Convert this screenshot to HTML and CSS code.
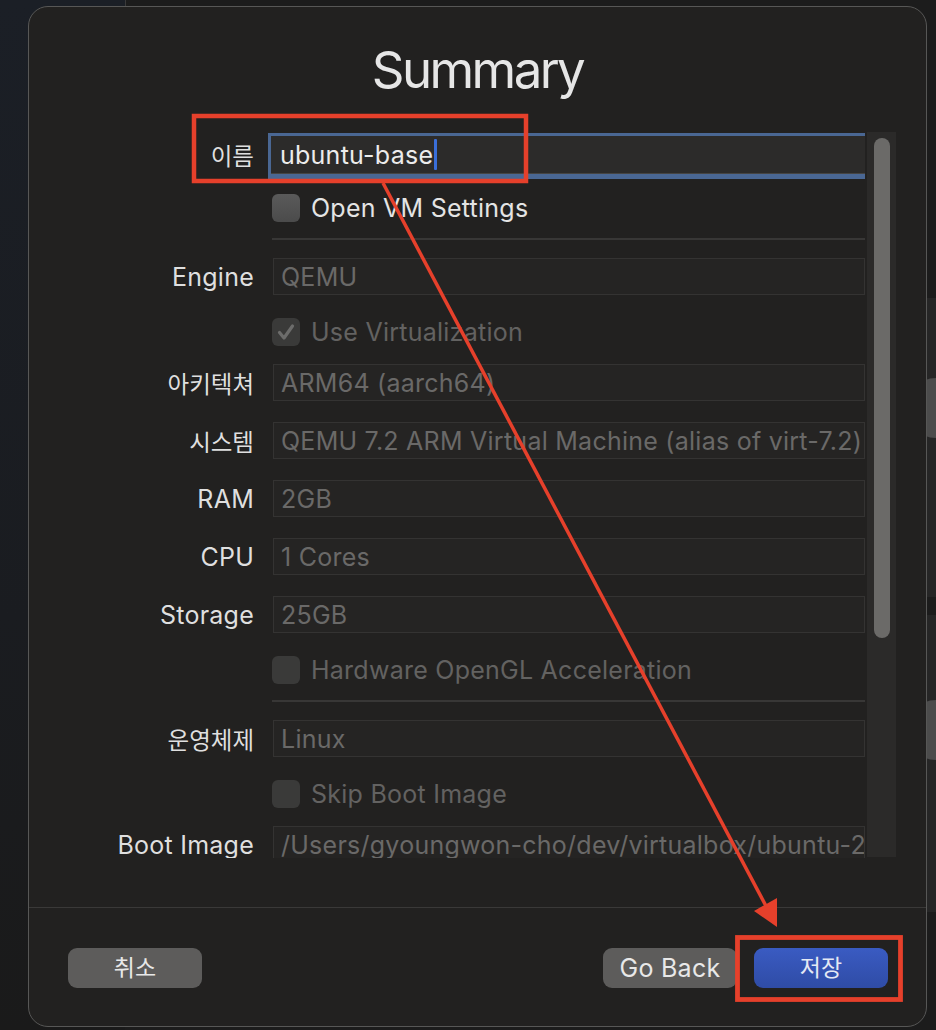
FILE: index.html
```html
<!DOCTYPE html>
<html lang="ko">
<head>
<meta charset="utf-8">
<title>Summary</title>
<link rel="stylesheet" href="styles.css">
</head>
<body>
<div class="backdrop">
  <div class="bd-left"></div>
  <div class="bd-top-line"></div>
  <div class="bd-panel bd-panel-a"></div>
  <div class="bd-panel bd-panel-b"></div>
  <div class="bd-circle bd-circle-a"></div>
  <div class="bd-circle bd-circle-b"></div>
</div>

<div class="dialog">
  <h1 class="title">Summary</h1>

  <div class="scroll">
    <div class="form">
      <div class="row field-row name-row">
        <span class="lbl ko">이름</span>
        <div class="field name-field"><span class="val">ubuntu-base</span><span class="caret"></span></div>
      </div>
      <div class="row check-row">
        <span></span>
        <div class="check"><span class="box"></span><span class="ctext">Open VM Settings</span></div>
      </div>
      <div class="sep"></div>
      <div class="row field-row">
        <span class="lbl">Engine</span>
        <div class="field"><span class="val">QEMU</span></div>
      </div>
      <div class="row check-row">
        <span></span>
        <div class="check disabled"><span class="box checked"><svg viewBox="0 0 28 28" width="28" height="28"><path d="M7.5 14.5 L12 20 L20.5 8" fill="none" stroke="#6c6c6b" stroke-width="3.2" stroke-linecap="round" stroke-linejoin="round"/></svg></span><span class="ctext">Use Virtualization</span></div>
      </div>
      <div class="row field-row">
        <span class="lbl ko">아키텍쳐</span>
        <div class="field"><span class="val">ARM64 (aarch64)</span></div>
      </div>
      <div class="row field-row">
        <span class="lbl ko">시스템</span>
        <div class="field"><span class="val">QEMU 7.2 ARM Virtual Machine (alias of virt-7.2)</span></div>
      </div>
      <div class="row field-row">
        <span class="lbl">RAM</span>
        <div class="field"><span class="val">2GB</span></div>
      </div>
      <div class="row field-row">
        <span class="lbl">CPU</span>
        <div class="field"><span class="val">1 Cores</span></div>
      </div>
      <div class="row field-row">
        <span class="lbl">Storage</span>
        <div class="field"><span class="val">25GB</span></div>
      </div>
      <div class="row check-row">
        <span></span>
        <div class="check disabled"><span class="box"></span><span class="ctext">Hardware OpenGL Acceleration</span></div>
      </div>
      <div class="sep"></div>
      <div class="row field-row">
        <span class="lbl ko">운영체제</span>
        <div class="field"><span class="val">Linux</span></div>
      </div>
      <div class="row check-row">
        <span></span>
        <div class="check disabled"><span class="box"></span><span class="ctext">Skip Boot Image</span></div>
      </div>
      <div class="row field-row">
        <span class="lbl">Boot Image</span>
        <div class="field"><span class="val">/Users/gyoungwon-cho/dev/virtualbox/ubuntu-2</span></div>
      </div>
    </div>
    <div class="track"><div class="thumb"></div></div>
  </div>

  <div class="footer">
    <button class="btn ko">취소</button>
    <div class="spacer"></div>
    <button class="btn">Go Back</button>
    <button class="btn primary ko">저장</button>
  </div>
</div>

<svg class="annot" width="936" height="1030" viewBox="0 0 936 1030">
  <rect x="194" y="116" width="332" height="65" fill="none" stroke="#e6402b" stroke-width="4.5"/>
  <rect x="737.5" y="937.5" width="163" height="62" fill="none" stroke="#e6402b" stroke-width="4.8"/>
  <line x1="383" y1="183" x2="766" y2="906" stroke="#e6402b" stroke-width="3.5"/>
  <polygon points="777,927 754,911 777,898" fill="#e6402b"/>
</svg>
</body>
</html>
```

FILE: styles.css
```css
* { box-sizing: border-box; }

html, body {
  margin: 0;
  padding: 0;
}

body {
  width: 936px;
  height: 1030px;
  overflow: hidden;
  position: relative;
  background: #1c1c1c;
  font-family: Inter, "Noto Sans CJK KR", sans-serif;
  font-size: 25px;
  letter-spacing: 0.25px;
  color: #e2e2e2;
  padding: 6px 9px 0 28px;
}

/* desktop behind the sheet */
.backdrop { position: absolute; inset: 0; z-index: 0; }
.bd-left {
  position: absolute; left: 0; top: 0; width: 125px; height: 1030px;
  background: linear-gradient(180deg, #1b1f26 0%, #1a1c20 60%, #1a1a1a 100%);
}
.bd-top-line { position: absolute; left: 125px; top: 0; width: 1px; height: 8px; background: #3a3a3a; }
.bd-panel { position: absolute; left: 927px; width: 9px; background: #262626; }
.bd-panel-a { top: 298px; height: 299px; }
.bd-panel-b { top: 615px; height: 297px; }
.bd-circle { position: absolute; width: 60px; height: 60px; border-radius: 50%; background: #4c4c4c; left: 906px; }
.bd-circle-a { top: 378px; }
.bd-circle-b { top: 700px; }

/* sheet */
.dialog {
  position: relative;
  z-index: 1;
  width: 899px;
  height: 1021px;
  background: #222120;
  border: 1px solid #575756;
  border-radius: 20px;
  display: flex;
  flex-direction: column;
}

.title {
  margin: 37px 0 0;
  font-size: 51px;
  line-height: 51px;
  height: 51px;
  font-weight: 400;
  text-align: center;
  color: #e6e6e6;
  letter-spacing: -2.6px;
}

.scroll {
  margin-top: 37px;
  height: 726px;
  display: flex;
  overflow: hidden;
  padding-right: 30px;
}

.form {
  flex: 1;
  padding-top: 4px;
  display: flex;
  flex-direction: column;
  overflow: hidden;
}

.row {
  display: grid;
  grid-template-columns: 225px 592px;
  column-gap: 19px;
  align-items: center;
  flex: none;
}

.field-row { height: 37px; }
.name-row { height: 38px; }
.check-row { height: 28px; }

.field-row + .field-row { margin-top: 21px; }
.field-row + .check-row { margin-top: 22px; }
.name-row + .check-row { margin-top: 19px; }
.check-row + .field-row { margin-top: 19px; }
.check-row + .sep { margin-top: 17px; }
.sep + .field-row { margin-top: 18px; }

.lbl {
  text-align: right;
  color: #dfdfdf;
  white-space: nowrap;
}

.ko { font-size: 23.5px; letter-spacing: 0; }

.field {
  height: 37px;
  background: #252423;
  border: 1px solid #343332;
  display: flex;
  align-items: center;
  padding-left: 7px;
  overflow: hidden;
  white-space: nowrap;
  color: #6a6968;
}

.name-field {
  height: 38px;
  margin-left: -2px;
  background: #2c2b2a;
  border: none;
  border-bottom: 1px solid #464543;
  padding-left: 9px;
  color: #ececec;
  box-shadow: 0 0 0 3px #4a6793, 0 2px 0 3px #4a6793;
}

.caret {
  display: inline-block;
  width: 3px;
  height: 31px;
  margin-left: 1px;
  background: #3a6ed8;
  border-radius: 1px;
}

.sep {
  height: 2px;
  background: #383736;
  margin-left: 243px;
  width: 593px;
  flex: none;
}

.check {
  display: flex;
  align-items: center;
  gap: 11px;
  margin-left: -1px;
  color: #e4e4e4;
  white-space: nowrap;
}

.box {
  width: 28px;
  height: 28px;
  border-radius: 6px;
  background: linear-gradient(180deg, #5a5a5a, #4b4b4b);
  flex: none;
  display: block;
}
.box svg { display: block; }

.check.disabled { color: #636261; }
.check.disabled .box { background: #3a3a39; }
.box.checked { background: #3c3c3b; }

.track {
  width: 29px;
  margin-left: 2px;
  height: 725px;
  background: #2b2a29;
  flex: none;
  padding: 6px 6px 0 7px;
}
.thumb {
  width: 16px;
  height: 500px;
  border-radius: 8px;
  background: #6b6a68;
}

.footer {
  margin-top: 49px;
  border-top: 1px solid #3a3938;
  display: flex;
  align-items: flex-start;
  padding: 40px 38px 0 39px;
  gap: 17px;
}
.spacer { flex: 1; }

.btn {
  height: 40px;
  width: 134px;
  border: none;
  border-radius: 9px;
  background: #5d5c5b;
  color: #e8e8e8;
  font-family: Inter, "Noto Sans CJK KR", sans-serif;
  font-size: 25px;
  letter-spacing: 0.25px;
  padding: 0;
  line-height: 40px;
}
.btn.ko { font-size: 23px; letter-spacing: 0; }
.btn.primary {
  background: linear-gradient(180deg, #3a5bc2 0%, #2f4ca6 100%);
  color: #e4e8f4;
}

.annot {
  position: absolute;
  left: 0;
  top: 0;
  z-index: 2;
  pointer-events: none;
}
```
